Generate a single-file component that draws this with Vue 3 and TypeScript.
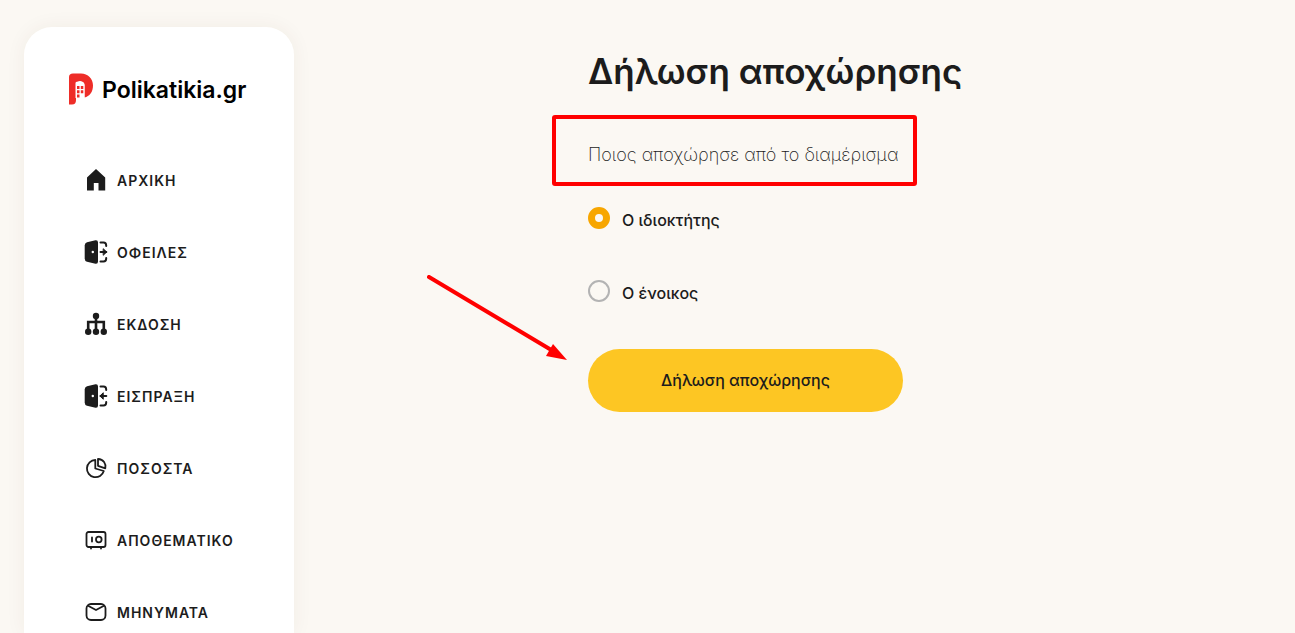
<script setup lang="ts">
import { ref } from 'vue'

interface NavItem {
  label: string
  icon: string
}

const items: NavItem[] = [
  { label: 'ΑΡΧΙΚΗ', icon: 'home' },
  { label: 'ΟΦΕΙΛΕΣ', icon: 'exit' },
  { label: 'ΕΚΔΟΣΗ', icon: 'tree' },
  { label: 'ΕΙΣΠΡΑΞΗ', icon: 'enter' },
  { label: 'ΠΟΣΟΣΤΑ', icon: 'pie' },
  { label: 'ΑΠΟΘΕΜΑΤΙΚΟ', icon: 'safe' },
  { label: 'ΜΗΝΥΜΑΤΑ', icon: 'mail' },
]

const who = ref('owner')
</script>

<template>
  <div class="page">
    <aside class="sidebar">
      <a class="logo" href="#">
        <svg class="logo-mark" viewBox="0 0 26 32" aria-hidden="true">
          <path fill="#ee2d28" d="M1 4Q1 .5 5 .5H13C20 .5 25 5.500 25 12.500C25 19 21.500 23.500 16.500 24.500V12Q16.500 8.500 12 8L8 9V27Q8 31.500 4 31.500H1Z" />
          <path fill="#fff" d="M7.500 9.500L12 8.500Q16.500 9 16.500 12V25H7.500Z" />
          <path fill="#ee2d28" d="M9 13h2.500v3H9zM12.800 13h2.500v3h-2.500zM9 17.300h2.500v3H9zM12.800 17.300h2.500v3h-2.500zM9 21.600h2.500v3H9z" />
        </svg>
        <span class="logo-name">Polikatikia.gr</span>
      </a>
      <nav class="nav">
        <a v-for="item in items" :key="item.label" class="nav-item" href="#">
          <svg class="icon" viewBox="0 0 24 24" fill="none" stroke="#1c1c1c" stroke-width="1.800" stroke-linecap="round" stroke-linejoin="round" aria-hidden="true">
            <path v-if="item.icon === 'home'" fill="#1c1c1c" stroke="none" d="M12 1L21.200 9.500V22.500H14.500V15H9.800V22.500H3V9.500Z" />
            <template v-else-if="item.icon === 'exit' || item.icon === 'enter'">
              <path fill="#1c1c1c" stroke="none" d="M3 2.200L11.500 .3Q14 0 14 2.500V21.500Q14 24 11.500 23.700L3 21.800Q.7 21 .7 18.500V5.500Q.7 3 3 2.200Z" />
              <circle cx="8.800" cy="12" r="1.200" fill="#fff" stroke="none" />
              <path stroke-width="2" d="M16.500 2.500H19.500Q22.200 2.500 22.200 5.500V6M16.500 21.500H19.500Q22.200 21.500 22.200 18.500V18M16.500 12H22.300" />
              <path v-if="item.icon === 'exit'" fill="#1c1c1c" stroke-width="1" d="M19.500 9L22.700 12L19.500 15Z" />
              <path v-else fill="#1c1c1c" stroke-width="1" d="M19 9L15.900 12L19 15Z" />
            </template>
            <template v-else-if="item.icon === 'tree'">
              <path stroke-width="2.600" stroke-linecap="butt" stroke-linejoin="miter" d="M12 4V20M4.200 20V10H19.800V20" />
              <g fill="#1c1c1c" stroke="none">
                <circle cx="12" cy="4" r="3.200" />
                <circle cx="4.200" cy="19.700" r="3.200" />
                <circle cx="12" cy="19.700" r="3.200" />
                <circle cx="19.800" cy="19.700" r="3.200" />
              </g>
            </template>
            <template v-else-if="item.icon === 'pie'">
              <path d="M11.300 4A8.600 8.600 0 1 0 19.800 15L11.300 12.500Z" />
              <path d="M14 3V9.800L21.300 12.300C22.300 7.500 19.500 3.200 14 3Z" />
            </template>
            <template v-else-if="item.icon === 'safe'">
              <rect x="2.500" y="4" width="19" height="15" rx="2" />
              <path d="M8 9.500V13.500M7 19.500V20.500M17 19.500V20.500" />
              <circle cx="14.800" cy="11.500" r="2.800" />
            </template>
            <template v-else>
              <rect x="2.500" y="4" width="19" height="16" rx="4.500" />
              <path d="M4.500 6L12 10L19.500 6" />
            </template>
          </svg>
          <span>{{ item.label }}</span>
        </a>
      </nav>
    </aside>

    <main class="main">
      <form class="form" @submit.prevent>
        <h1 class="title">Δήλωση αποχώρησης</h1>
        <fieldset class="choices">
          <legend class="question">
            <span class="question-text">Ποιος αποχώρησε από το διαμέρισμα</span>
            <span class="frame" aria-hidden="true"></span>
          </legend>
          <label class="choice">
            <input v-model="who" type="radio" name="who" value="owner" />
            <span>Ο ιδιοκτήτης</span>
          </label>
          <label class="choice">
            <input v-model="who" type="radio" name="who" value="tenant" />
            <span>Ο ένοικος</span>
          </label>
        </fieldset>
        <div class="action">
          <button class="submit" type="submit">Δήλωση αποχώρησης</button>
          <svg class="arrow" viewBox="0 0 140 86" aria-hidden="true">
            <path d="M2 2L126 76" fill="none" stroke="#f00" stroke-width="4" stroke-linecap="round" />
            <path d="M126 69L140 85L119 81Z" fill="#f00" />
          </svg>
        </div>
      </form>
    </main>
  </div>
</template>

<style>
body {
  margin: 0;
  background: #fbf8f3;
}
</style>

<style scoped>
.page {
  display: flex;
  box-sizing: border-box;
  height: 100vh;
  overflow: hidden;
  padding: 27px 24px 0;
  background: #fbf8f3;
  color: #1c1c1c;
  font-family: Inter, "Open Sans", sans-serif;
}
.sidebar {
  flex: none;
  box-sizing: border-box;
  width: 270px;
  padding-top: 44px;
  border-radius: 28px 28px 0 0;
  background: #fff;
  box-shadow: 0 0 20px rgba(90, 50, 20, 0.06);
}
.logo {
  display: flex;
  align-items: center;
  gap: 8px;
  margin-left: 44px;
  color: #000;
  font: 600 23px/34px Inter, sans-serif;
  text-decoration: none;
}
.logo-mark {
  width: 26px;
  height: 32px;
}
.logo-name {
  padding-top: 2px;
}
.nav {
  display: flex;
  flex-direction: column;
  margin-top: 37px;
}
.nav-item {
  display: flex;
  align-items: center;
  gap: 9px;
  height: 72px;
  padding-left: 60px;
  color: #1c1c1c;
  font-size: 14px;
  font-weight: 600;
  letter-spacing: 1px;
  text-decoration: none;
}
.icon {
  width: 24px;
  height: 24px;
}
.main {
  flex: 1;
  padding: 16px 0 0 294px;
}
.form {
  width: 315px;
}
.title {
  margin: 0;
  font-size: 35px;
  font-weight: 600;
  line-height: 56px;
  white-space: nowrap;
}
.choices {
  margin: 0;
  padding: 0;
  border: 0;
}
.question {
  position: relative;
  padding: 40px 0 36px;
  font-size: 18px;
  font-weight: 200;
  line-height: 32px;
  white-space: nowrap;
}
.question-text {
  display: block;
}
.frame {
  position: absolute;
  top: 16px;
  left: -36px;
  box-sizing: border-box;
  width: 365px;
  height: 71px;
  border: 4px solid #f00;
  border-radius: 3px;
}
.choice {
  display: flex;
  align-items: center;
  gap: 12px;
  height: 22px;
  font-size: 16px;
  font-weight: 500;
}
.choice + .choice {
  margin-top: 51px;
}
.choice input {
  box-sizing: border-box;
  width: 22px;
  height: 22px;
  margin: 0;
  border: 2px solid #b3b3b3;
  border-radius: 50%;
  appearance: none;
}
.choice input:checked {
  border: 7px solid #f7a600;
}
.choice span {
  padding-top: 3px;
}
.action {
  position: relative;
  margin-top: 47px;
}
.submit {
  width: 100%;
  height: 63px;
  padding: 0 24px 2px;
  border: 0;
  border-radius: 32px;
  background: #fdc623;
  color: #1c1c1c;
  font: 500 16px/24px Inter, sans-serif;
}
.arrow {
  position: absolute;
  top: -74px;
  left: -161px;
  width: 140px;
  height: 86px;
}
</style>
